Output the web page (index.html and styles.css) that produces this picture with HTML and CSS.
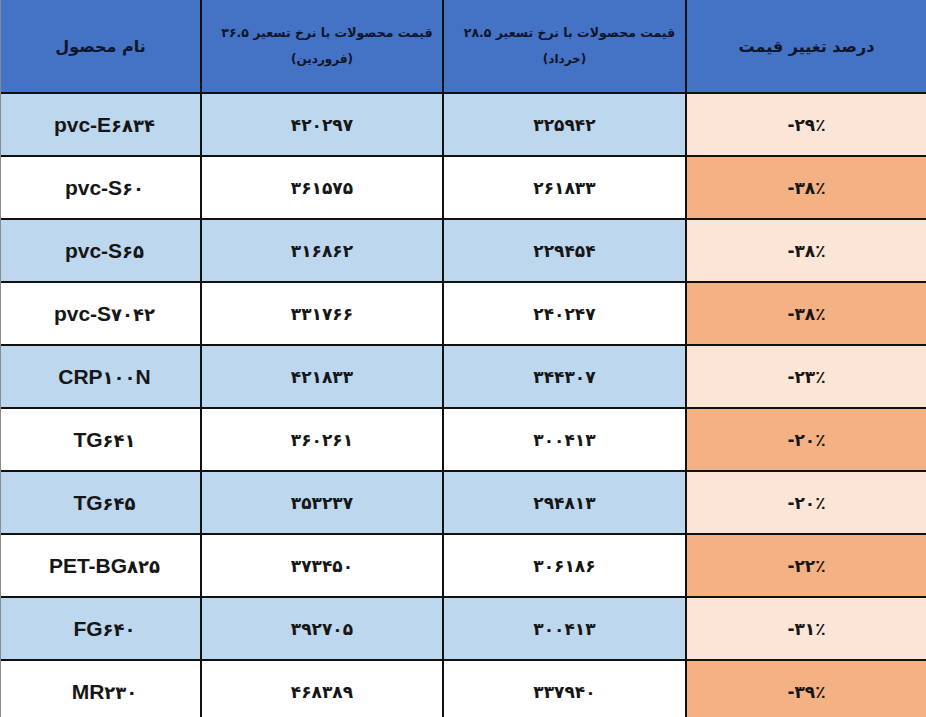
FILE: index.html
```html
<!DOCTYPE html>
<html lang="fa">
<head>
<meta charset="utf-8">
<title>درصد تغییر قیمت</title>
<link rel="stylesheet" href="styles.css">
</head>
<body>
<div class="table">
  <div class="cell head"><span class="fa">نام محصول</span></div>
  <div class="cell head two"><span class="fa l1">قیمت محصولات با نرخ تسعیر ۳۶.۵</span><span class="fa l2">(فروردین)</span></div>
  <div class="cell head two"><span class="fa l1">قیمت محصولات با نرخ تسعیر ۲۸.۵</span><span class="fa l2">(خرداد)</span></div>
  <div class="cell head"><span class="fa">درصد تغییر قیمت</span></div>

  <div class="cell blue name">pvc-E<span class="d">۶۸۳۴</span></div><div class="cell blue num">۴۲۰۲۹۷</div><div class="cell blue num">۳۲۵۹۴۲</div><div class="cell peach pct">-۲۹٪</div>
  <div class="cell white name">pvc-S<span class="d">۶۰</span></div><div class="cell white num">۳۶۱۵۷۵</div><div class="cell white num">۲۶۱۸۳۳</div><div class="cell orange pct">-۳۸٪</div>
  <div class="cell blue name">pvc-S<span class="d">۶۵</span></div><div class="cell blue num">۳۱۶۸۶۲</div><div class="cell blue num">۲۲۹۴۵۴</div><div class="cell peach pct">-۳۸٪</div>
  <div class="cell white name">pvc-S<span class="d">۷۰۴۲</span></div><div class="cell white num">۳۳۱۷۶۶</div><div class="cell white num">۲۴۰۲۴۷</div><div class="cell orange pct">-۳۸٪</div>
  <div class="cell blue name">CRP<span class="d">۱۰۰</span>N</div><div class="cell blue num">۴۲۱۸۳۳</div><div class="cell blue num">۳۴۴۳۰۷</div><div class="cell peach pct">-۲۳٪</div>
  <div class="cell white name">TG<span class="d">۶۴۱</span></div><div class="cell white num">۳۶۰۲۶۱</div><div class="cell white num">۳۰۰۴۱۳</div><div class="cell orange pct">-۲۰٪</div>
  <div class="cell blue name">TG<span class="d">۶۴۵</span></div><div class="cell blue num">۳۵۳۲۳۷</div><div class="cell blue num">۲۹۴۸۱۳</div><div class="cell peach pct">-۲۰٪</div>
  <div class="cell white name">PET-BG<span class="d">۸۲۵</span></div><div class="cell white num">۳۷۳۴۵۰</div><div class="cell white num">۳۰۶۱۸۶</div><div class="cell orange pct">-۲۲٪</div>
  <div class="cell blue name">FG<span class="d">۶۴۰</span></div><div class="cell blue num">۳۹۲۷۰۵</div><div class="cell blue num">۳۰۰۴۱۳</div><div class="cell peach pct">-۳۱٪</div>
  <div class="cell white name">MR<span class="d">۲۳۰</span></div><div class="cell white num">۴۶۸۳۸۹</div><div class="cell white num">۳۳۷۹۴۰</div><div class="cell orange pct">-۳۹٪</div>
</div>
</body>
</html>
```
FILE: styles.css
```css
html, body {
  margin: 0;
  padding: 0;
  overflow: hidden;
  background: #ffffff;
}
.table {
  display: grid;
  grid-template-columns: 199px 240px 241px 1fr;
  grid-template-rows: 92px;
  grid-auto-rows: 61px;
  gap: 2px;
  background: #111111;
  border-left: 1px solid #8a8a8a;
  width: 925px;
  font-family: "Liberation Sans", "DejaVu Sans", sans-serif;
  font-weight: bold;
  color: #161616;
}
.cell {
  display: flex;
  align-items: center;
  justify-content: center;
  direction: ltr;
}
.head {
  background: #4472c4;
  color: #10152a;
  flex-direction: column;
  font-family: "DejaVu Sans", sans-serif;
  font-size: 16px;
}
.fa {
  direction: rtl;
  white-space: nowrap;
}
.two .l1 {
  font-size: 12.5px;
  line-height: 27px;
  padding-left: 10px;
}
.two .l2 {
  font-size: 12px;
  line-height: 27px;
}
.blue { background: #bdd7ee; }
.white { background: #ffffff; }
.peach { background: #fbe5d6; }
.orange { background: #f4b183; }
.name {
  font-size: 21px;
  padding-left: 8px;
}
.name .d {
  font-family: "DejaVu Sans", sans-serif;
  font-size: 18px;
  padding-top: 2px;
}
.num {
  font-family: "DejaVu Sans", sans-serif;
  font-size: 17px;
  letter-spacing: 1px;
}
.pct {
  font-family: "DejaVu Sans", sans-serif;
  font-size: 17px;
  letter-spacing: 1px;
}
```
